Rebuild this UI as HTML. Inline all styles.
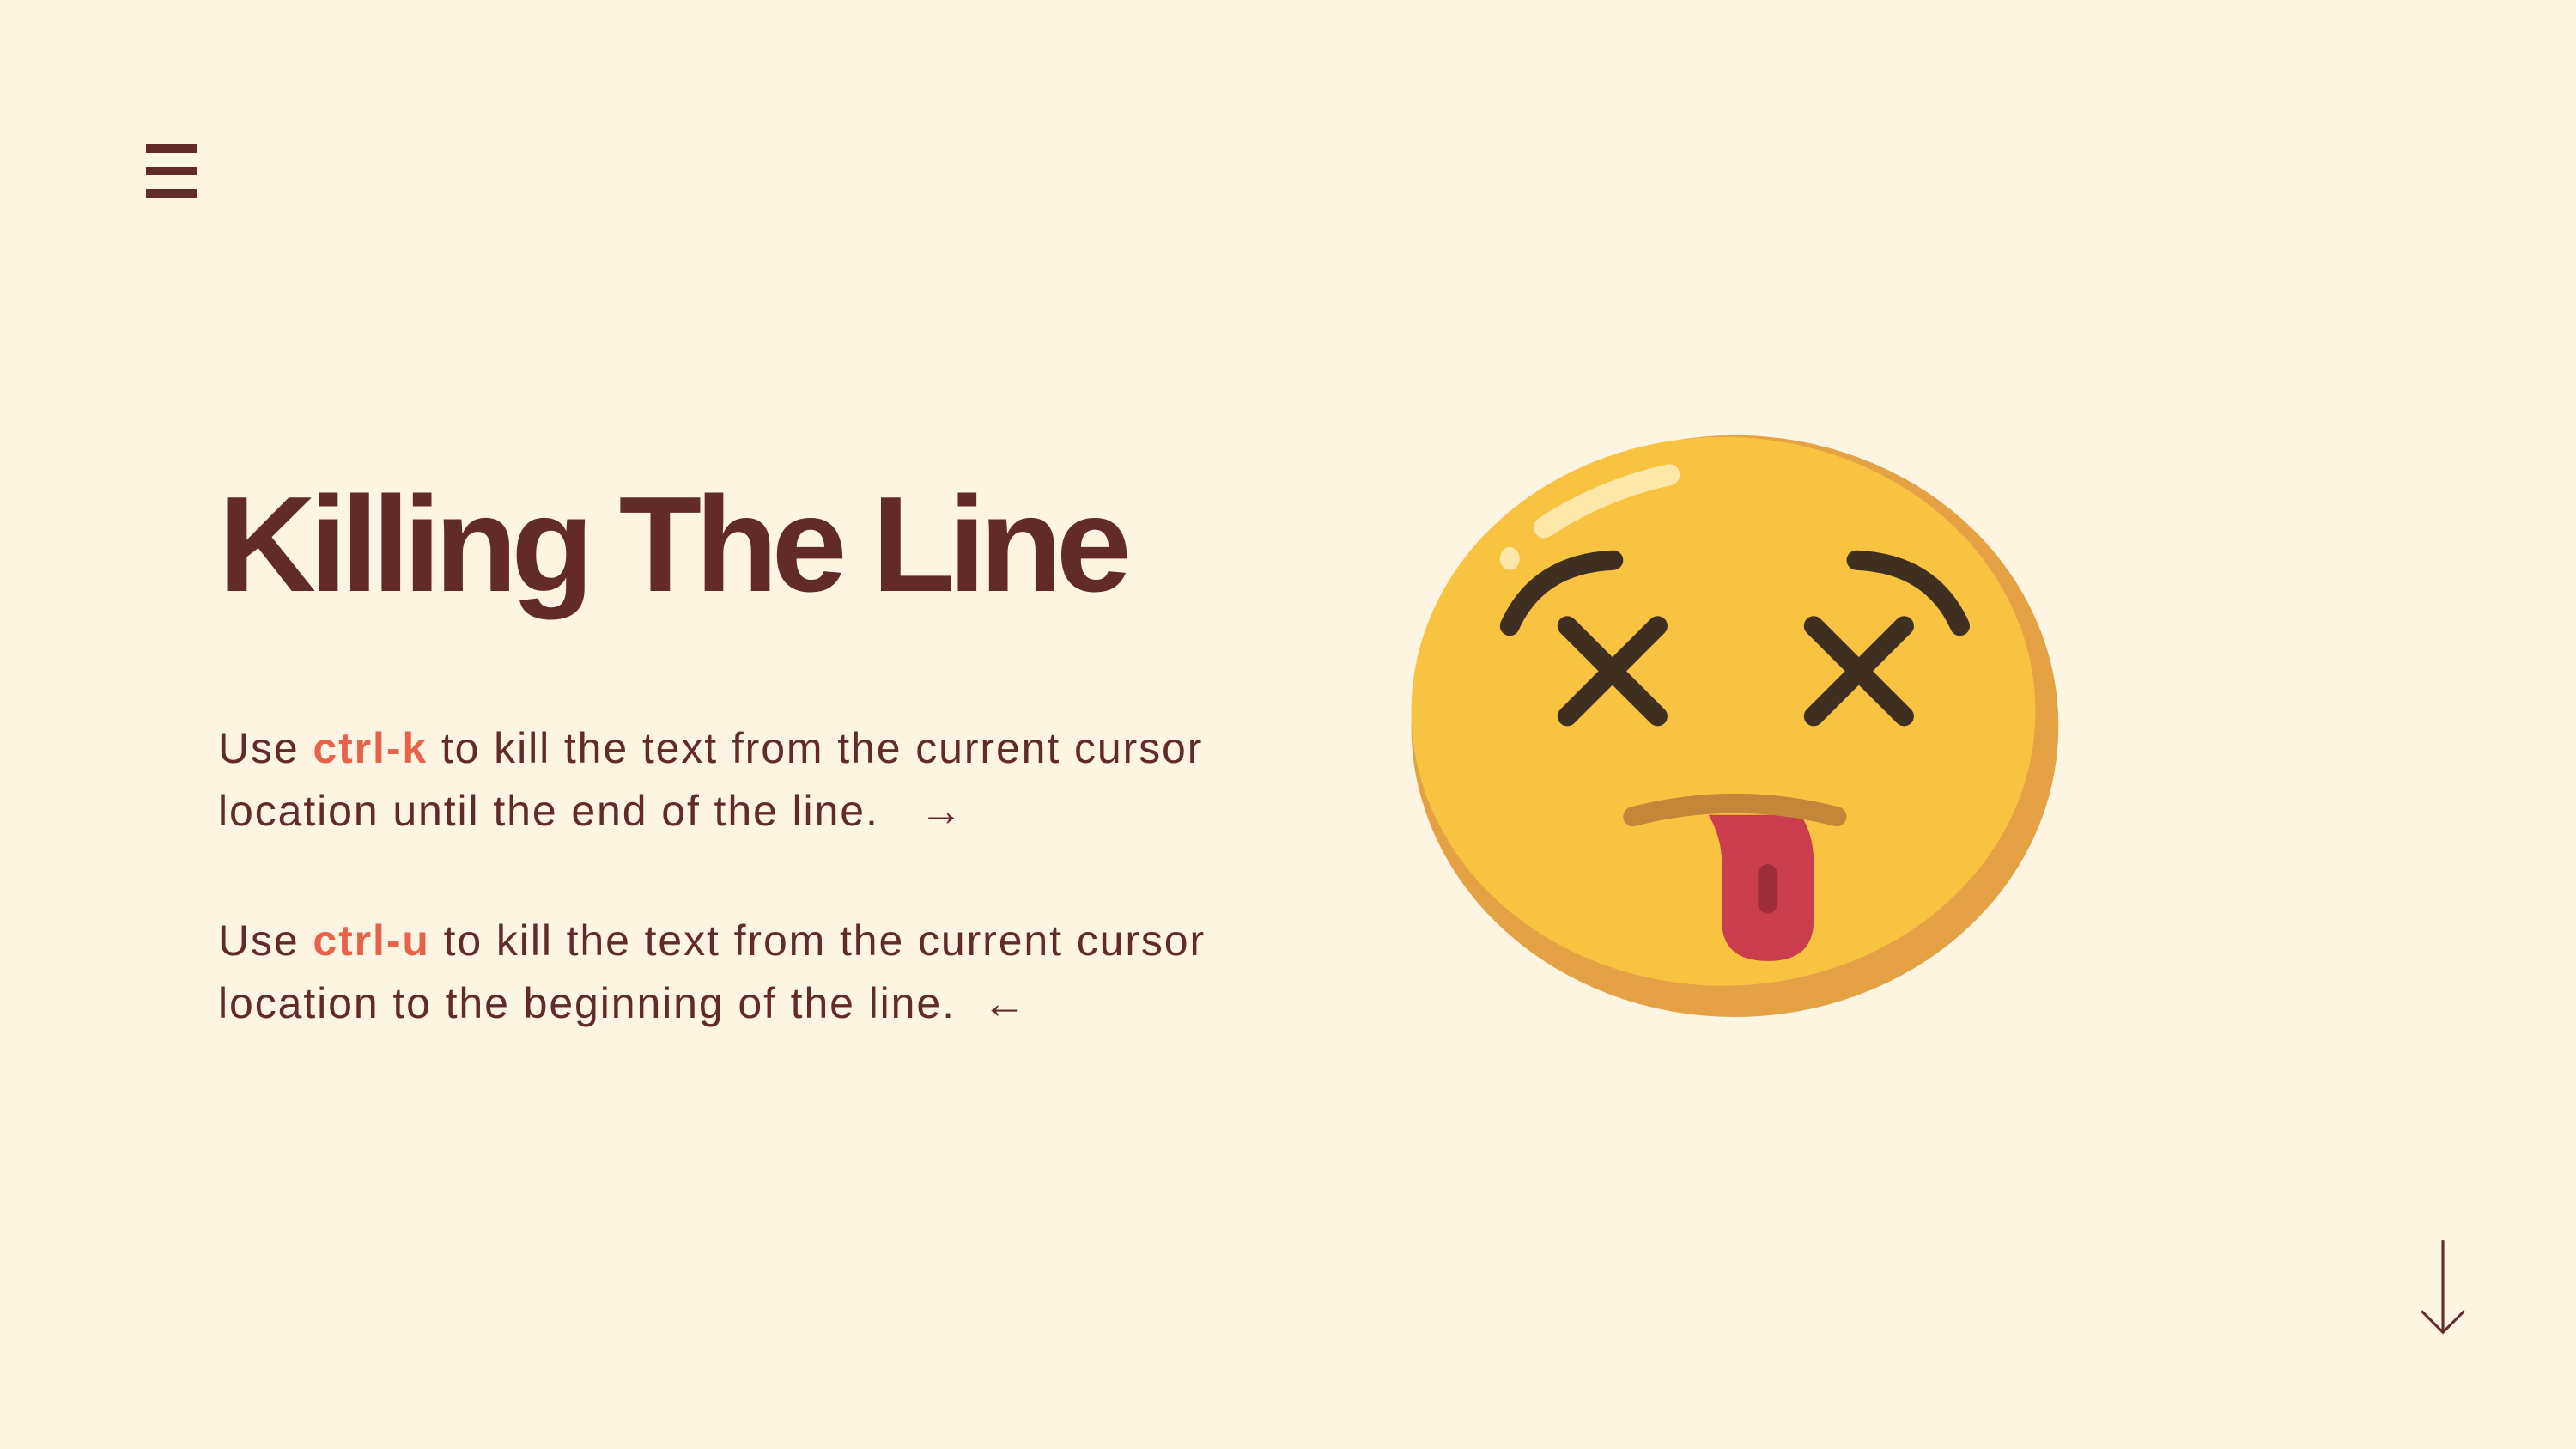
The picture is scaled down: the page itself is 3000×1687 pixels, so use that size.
<!DOCTYPE html>
<html><head><meta charset="utf-8"><style>
html,body{margin:0;padding:0;}
body{width:3000px;height:1687px;background:#fef4e2;position:relative;overflow:hidden;font-family:"Liberation Sans",sans-serif;color:#622a2b;}
.bar{position:absolute;left:170px;width:60px;height:10px;background:#622a2b;}
h1{position:absolute;left:254px;top:0;margin:0;font-size:158px;font-weight:bold;letter-spacing:-7.5px;line-height:1;white-space:nowrap;}
.p{position:absolute;left:254px;font-size:50px;letter-spacing:1.9px;white-space:nowrap;line-height:1;}
.o{color:#e8624a;font-weight:bold;}
svg{position:absolute;left:0;top:0;}
</style></head><body>
<div class="bar" style="top:168px"></div>
<div class="bar" style="top:194px"></div>
<div class="bar" style="top:220px"></div>
<h1 style="top:555px">Killing The Line</h1>
<div class="p" style="top:846px">Use <span class="o">ctrl-k</span> to kill the text from the current cursor</div>
<div class="p" style="top:919px">location until the end of the line. &nbsp; →</div>
<div class="p" style="top:1070px">Use <span class="o">ctrl-u</span> to kill the text from the current cursor</div>
<div class="p" style="top:1143px">location to the beginning of the line. &nbsp;←</div>
<svg width="3000" height="1687" viewBox="0 0 1568 882" preserveAspectRatio="none">
<ellipse cx="1056" cy="442" rx="197" ry="177" fill="#e4a244"/>
<ellipse cx="1049" cy="433" rx="190" ry="167" fill="#f9c342"/>
<path d="M940 321 Q975 298 1016 289" stroke="#fde7a9" stroke-width="13" fill="none" stroke-linecap="round"/>
<ellipse cx="919" cy="340" rx="6" ry="7" fill="#fde7a9"/>
<g stroke="#3e2f20" stroke-width="12" fill="none" stroke-linecap="round">
<path d="M919 381 Q936 343 982 341"/>
<path d="M1130 341 Q1176 343 1193 381"/>
<path d="M954 381 L1009 436 M1009 381 L954 436"/>
<path d="M1104 381 L1159 436 M1159 381 L1104 436"/>
</g>
<path d="M1040 496 Q1048 510 1048 525 L1048 560 Q1048 585 1076 585 Q1104 585 1104 560 L1104 525 Q1104 508 1096 496 Z" fill="#c93d4c"/>
<path d="M1076 532 L1076 550" stroke="#a02d3b" stroke-width="12" stroke-linecap="round"/>
<path d="M994 497 Q1056 481 1118 497" stroke="#c4873a" stroke-width="12" fill="none" stroke-linecap="round"/>
<g stroke="#622a2b" stroke-width="1.6" fill="none">
<path d="M1487 755 L1487 811 M1474 798 L1487 811 L1500 798"/>
</g>
</svg>
</body></html>
